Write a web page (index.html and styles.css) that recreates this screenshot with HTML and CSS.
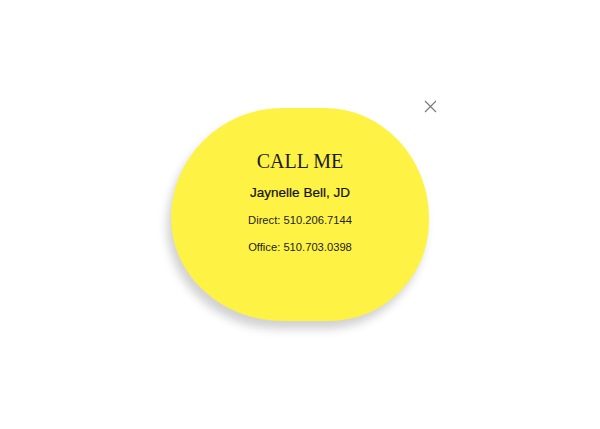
FILE: index.html
```html
<!DOCTYPE html>
<html>
<head>
<meta charset="utf-8">
<link rel="stylesheet" href="styles.css">
</head>
<body>
<div class="stage">
  <div class="note">
    <button class="close" aria-label="Close">
      <svg width="13" height="13" viewBox="0 0 13 13"><path d="M1 1L12 12M12 1L1 12" stroke="#777" stroke-width="1.1" fill="none"/></svg>
    </button>
    <div class="blob">
      <h1 class="title">CALL ME</h1>
      <p class="name">Jaynelle Bell, JD</p>
      <p class="line">Direct: 510.206.7144</p>
      <p class="line">Office: 510.703.0398</p>
    </div>
  </div>
</div>
</body>
</html>
```
FILE: styles.css
```css
html, body {
  margin: 0;
  padding: 0;
  background: #fff;
}
.stage {
  width: 600px;
  height: 429px;
  display: flex;
  align-items: center;
  justify-content: center;
}
.note {
  position: relative;
}
.blob {
  width: 258px;
  height: 213px;
  background: #fef345;
  border-radius: 112px 105px 100px 112px / 110px 110px 100px 103px;
  box-shadow: -4px 8px 10px rgba(0, 0, 0, 0.18);
  display: flex;
  flex-direction: column;
  align-items: center;
  padding-top: 43px;
  box-sizing: border-box;
  color: #1c1c1c;
}
.title {
  margin: 0;
  font-family: "Liberation Serif", serif;
  font-weight: normal;
  font-size: 20px;
  line-height: 20px;
}
.name {
  margin: 14px 0 0;
  font-family: "Liberation Sans", Arial, sans-serif;
  font-weight: normal;
  font-size: 13.5px;
  line-height: 16px;
  color: #111;
  -webkit-text-stroke: 0.2px #111;
}
.line {
  margin: 12px 0 0;
  font-family: "Liberation Sans", Arial, sans-serif;
  font-size: 11.2px;
  line-height: 15px;
}
.close {
  position: absolute;
  right: -8px;
  top: -8px;
  width: 13px;
  height: 13px;
  padding: 0;
  border: 0;
  background: transparent;
  display: flex;
}
```
